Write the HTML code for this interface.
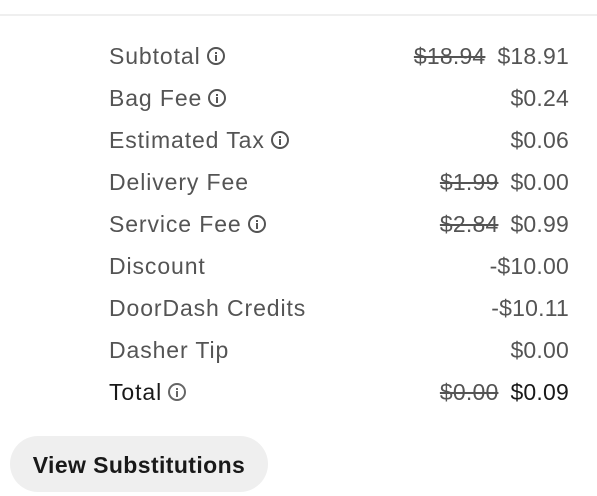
<!DOCTYPE html>
<html><head><style>
body{margin:0;width:597px;height:496px;background:#fff;font-family:"Liberation Sans",sans-serif;overflow:hidden;position:relative}
.line{position:absolute;left:0;right:0;top:14px;height:2px;background:#efefef}
.row{position:absolute;left:109px;width:460px;height:30px;display:flex;justify-content:space-between;align-items:center;font-size:23px;letter-spacing:0.9px;color:#545454}
.row>span:last-child{letter-spacing:0.2px}
.row.t{color:#191919}
.i{display:inline-block;width:18px;height:18px;border:2px solid currentColor;border-radius:50%;box-sizing:border-box;position:relative;vertical-align:-1px;margin-left:6px}
.i:before{content:"";position:absolute;left:6px;top:3px;width:2px;height:2px;background:currentColor}
.i:after{content:"";position:absolute;left:6px;top:6.5px;width:2px;height:5.5px;background:currentColor}
s{margin-right:12px}
.btn{position:absolute;left:10px;top:436px;width:258px;height:56px;border-radius:28px;background:#efefef;font-weight:bold;font-size:23px;letter-spacing:0.4px;color:#191919;line-height:58px;text-align:center}
</style></head><body>
<div class="line"></div>
<div class="row" style="top:41px"><span>Subtotal<span class="i"></span></span><span><s>$18.94</s>$18.91</span></div>
<div class="row" style="top:83px"><span>Bag Fee<span class="i"></span></span><span>$0.24</span></div>
<div class="row" style="top:125px"><span>Estimated Tax<span class="i"></span></span><span>$0.06</span></div>
<div class="row" style="top:167px"><span>Delivery Fee</span><span><s>$1.99</s>$0.00</span></div>
<div class="row" style="top:209px"><span>Service Fee<span class="i"></span></span><span><s>$2.84</s>$0.99</span></div>
<div class="row" style="top:251px"><span>Discount</span><span>-$10.00</span></div>
<div class="row" style="top:293px"><span>DoorDash Credits</span><span>-$10.11</span></div>
<div class="row" style="top:335px"><span>Dasher Tip</span><span>$0.00</span></div>
<div class="row t" style="top:377px"><span>Total<span class="i" style="color:#666"></span></span><span><s style="color:#545454">$0.00</s>$0.09</span></div>
<div class="btn">View Substitutions</div>
</body></html>
